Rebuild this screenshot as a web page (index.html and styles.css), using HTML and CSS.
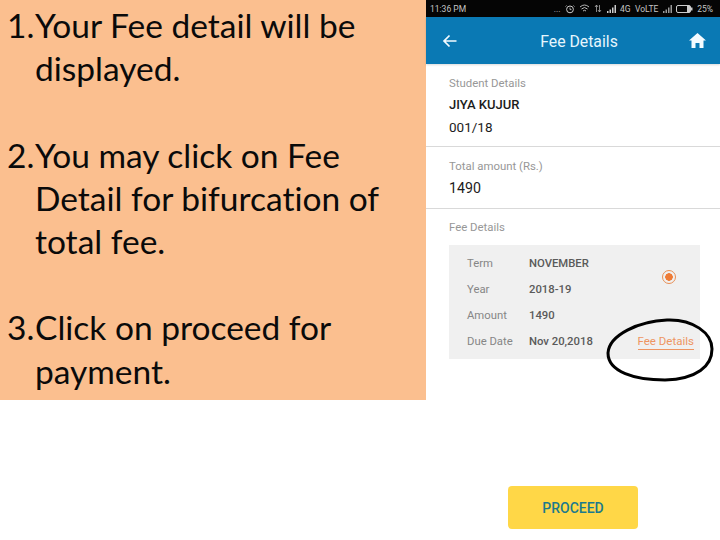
FILE: index.html
```html
<!DOCTYPE html>
<html lang="en">
<head>
<meta charset="utf-8">
<title>Fee Details</title>
<link rel="stylesheet" href="styles.css">
</head>
<body>
<main class="slide">
  <section class="notes">
    <ol class="steps">
      <li>Your Fee detail will be displayed.</li>
      <li>You may click on Fee Detail for bifurcation of total fee.</li>
      <li>Click on proceed for payment.</li>
    </ol>
  </section>
  <section class="phone">
    <div class="status">
      <span class="time">11:36 PM</span>
      <span class="status-right">
        <span class="dots">...</span>
        <svg class="si" width="10" height="10" viewBox="0 0 10 10"><circle cx="5" cy="5.4" r="3.4" fill="none" stroke="#ccc" stroke-width="1"/><path d="M5 3.6V5.6H6.5M1.5 1.5L.5 2.5M8.5 1.5L9.5 2.5" fill="none" stroke="#ccc" stroke-width=".8"/></svg>
        <svg class="si" width="11" height="9" viewBox="0 0 11 9"><path d="M1 3Q5.5-1 10 3M2.5 5Q5.5 2 8.5 5M4 7Q5.5 5.500 7 7" fill="none" stroke="#bbb" stroke-width="1"/></svg>
        <svg class="si" width="8" height="9" viewBox="0 0 8 9"><path d="M2.5 8V1M1 3L2.5 1L4 3M5.500 1V8M4 6L5.500 8L7 6" fill="none" stroke="#aaa" stroke-width=".8"/></svg>
        <svg class="si" width="9" height="8" viewBox="0 0 9 8"><path d="M0 8H1.500V6H0ZM2.500 8H4V4.500H2.500ZM5 8H6.500V2.500H5ZM7.500 8H9V0H7.500Z" fill="#ccc"/></svg>
        <span>4G</span>
        <span>VoLTE</span>
        <svg class="si" width="9" height="8" viewBox="0 0 9 8"><path d="M0 8H1.500V6H0ZM2.500 8H4V4.500H2.500ZM5 8H6.500V2.500H5ZM7.500 8H9V0H7.500Z" fill="#999"/></svg>
        <svg class="si" width="17" height="8" viewBox="0 0 17 8"><rect x=".5" y=".5" width="14" height="7" rx="1.500" fill="none" stroke="#ccc"/><rect x="11" y="1" width="3" height="6" fill="#ccc"/><rect x="15" y="2.500" width="1.500" height="3" fill="#ccc"/></svg>
        <span>25%</span>
      </span>
    </div>
    <header class="appbar">
      <svg class="bar-icon" width="16" height="14" viewBox="0 0 16 14"><path d="M14.500 7H2M7.500 1.500L2 7L7.500 12.500" fill="none" stroke="#f4fbff" stroke-width="1.700"/></svg>
      <h1 class="title">Fee Details</h1>
      <svg class="bar-icon" width="17" height="15" viewBox="0 0 17 15"><path d="M8.500 0L0 7.500H2.500V15H6.500V10H10.500V15H14.500V7.500H17Z" fill="#f4fbff"/></svg>
    </header>
    <div class="block block-student">
      <p class="label">Student Details</p>
      <p class="value value-name">JIYA KUJUR</p>
      <p class="value value-id">001/18</p>
    </div>
    <div class="block block-total">
      <p class="label">Total amount (Rs.)</p>
      <p class="value value-amount">1490</p>
    </div>
    <div class="block-fee">
      <p class="label">Fee Details</p>
      <div class="card">
        <dl class="rows">
          <dt>Term</dt><dd>NOVEMBER</dd>
          <dt>Year</dt><dd>2018-19</dd>
          <dt>Amount</dt><dd>1490</dd>
          <dt>Due Date</dt><dd>Nov 20,2018</dd>
        </dl>
        <div class="card-side">
          <span class="radio"></span>
          <a class="link">Fee Details</a>
        </div>
      </div>
    </div>
    <div class="action"><button class="proceed">PROCEED</button></div>
    <svg class="ring" width="110" height="66" viewBox="0 0 110 66"><path d="M3 37C4 19 34 5 62 4C88 3 107 17 107 33C107 50 92 63 60 64C30 64 3 56 3 37Z" fill="none" stroke="#000" stroke-width="3"/></svg>
  </section>
</main>
</body>
</html>
```
FILE: styles.css
```css
* { box-sizing: border-box; }
html, body { margin: 0; padding: 0; background: #fff; }
.slide {
  width: 720px;
  height: 540px;
  display: grid;
  grid-template-columns: 426px 294px;
  overflow: hidden;
}
.notes {
  height: 400px;
  background: #fbbf8f;
  padding-top: 4px;
  font-family: Lato, "Open Sans", sans-serif;
  font-size: 33.500px;
  line-height: 43.200px;
  color: #0a0a0a;
  font-variant-ligatures: none;
}
.steps { margin: 0; padding: 0 30px 0 35px; list-style: none; counter-reset: step; }
.steps li { counter-increment: step; position: relative; margin-bottom: 43.200px; }
.steps li::before { content: counter(step) "."; position: absolute; left: -28px; }
.phone {
  position: relative;
  height: 540px;
  display: flex;
  flex-direction: column;
  font-family: Roboto, sans-serif;
}
.status {
  height: 17px;
  background: #050505;
  color: #c4c4c4;
  display: flex;
  justify-content: space-between;
  align-items: center;
  padding: 0 7px 0 4px;
  font-size: 8.500px;
}
.status-right { display: flex; align-items: center; gap: 4.300px; }
.si { display: block; }
.appbar {
  height: 47px;
  background: #0a79b4;
  box-shadow: 0 1px 2px rgba(0,0,0,.15);
  display: flex;
  align-items: center;
  justify-content: space-between;
  padding: 0 14px 0 16px;
}
.title { margin: 2px 0 0 11px; font-size: 15.800px; font-weight: 400; color: #e6f6fd; }
.block { border-bottom: 1px solid #d9d9d9; padding-left: 23px; }
.block-student { height: 83px; padding-top: 11px; }
.block-total { height: 62px; padding-top: 11px; }
.block-fee { padding: 10px 20px 0 23px; }
.label { margin: 0; font-size: 11.400px; line-height: 16px; color: #979797; }
.value { margin: 6px 0 0; font-size: 12.500px; line-height: 16px; color: #1c1c1c; }
.value-name { margin-top: 6px; font-size: 13px; font-weight: 500; }
.value-id { font-size: 13.500px; }
.value-amount { margin-top: 6px; font-size: 14.200px; }
.card {
  margin-top: 10px;
  height: 114px;
  background: #f0f0f0;
  display: flex;
  justify-content: space-between;
  padding: 5px 6px 5px 18px;
}
.rows {
  margin: 0;
  display: grid;
  grid-template-columns: 62px auto;
  grid-auto-rows: 26px;
  align-items: center;
  font-size: 11.300px;
}
.rows dt { color: #868686; }
.rows dd { margin: 0; color: #5a5a5a; font-weight: 500; }
.card-side {
  display: flex;
  flex-direction: column;
  align-items: flex-end;
  justify-content: space-between;
  padding: 20px 0 4px;
}
.radio {
  width: 14px;
  height: 14px;
  margin-right: 18px;
  border-radius: 50%;
  border: 1px solid #e88f55;
  background: radial-gradient(circle, #ee7b36 0 3.500px, transparent 4px);
}
.link {
  font-size: 11.500px;
  line-height: 15px;
  color: #ee9562;
  border-bottom: 1px solid #ee9562;
}
.action { margin-top: 127px; display: flex; padding-left: 82px; }
.proceed {
  width: 130px;
  height: 43px;
  border: 0;
  border-radius: 4px;
  background: #ffd747;
  color: #1c7a8c;
  font-family: Roboto, sans-serif;
  font-size: 14px;
  font-weight: 500;
}
.ring { position: absolute; left: 179px; top: 316px; }
```
